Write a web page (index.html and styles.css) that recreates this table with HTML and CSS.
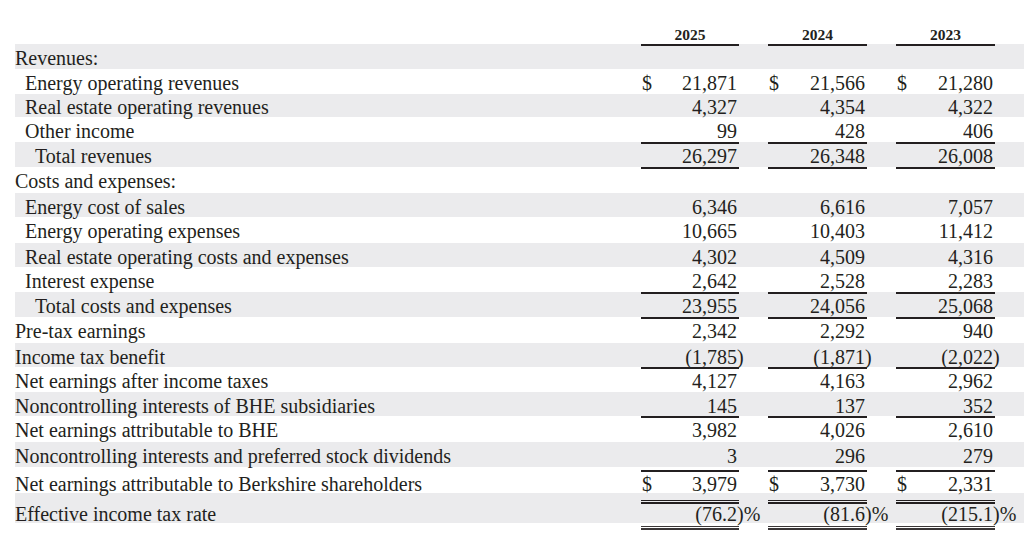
FILE: index.html
```html
<!DOCTYPE html>
<html lang="en">
<head>
<meta charset="utf-8">
<title>BHE Results</title>
<link rel="stylesheet" href="styles.css">
</head>
<body>
<div class="sheet">
  <div class="row head">
    <div class="label"></div>
    <div class="year">2025</div>
    <div class="year">2024</div>
    <div class="year">2023</div>
  </div>

  <div class="row shade h25">
    <div class="label">Revenues:</div>
    <div class="amt ol"></div><div class="amt ol"></div><div class="amt ol"></div>
  </div>
  <div class="row h25">
    <div class="label l2">Energy operating revenues</div>
    <div class="amt"><span class="cur">$</span><span class="num">21,871</span></div>
    <div class="amt"><span class="cur">$</span><span class="num">21,566</span></div>
    <div class="amt"><span class="cur">$</span><span class="num">21,280</span></div>
  </div>
  <div class="row shade h23 up">
    <div class="label l2">Real estate operating revenues</div>
    <div class="amt"><span class="num">4,327</span></div>
    <div class="amt"><span class="num">4,354</span></div>
    <div class="amt"><span class="num">4,322</span></div>
  </div>
  <div class="row h25">
    <div class="label l2">Other income</div>
    <div class="amt"><span class="num">99</span></div>
    <div class="amt"><span class="num">428</span></div>
    <div class="amt"><span class="num">406</span></div>
  </div>
  <div class="row shade h25">
    <div class="label l3">Total revenues</div>
    <div class="amt ol"><span class="num">26,297</span></div>
    <div class="amt ol"><span class="num">26,348</span></div>
    <div class="amt ol"><span class="num">26,008</span></div>
  </div>
  <div class="row h26">
    <div class="label">Costs and expenses:</div>
    <div class="amt ol"></div><div class="amt ol"></div><div class="amt ol"></div>
  </div>
  <div class="row shade h24">
    <div class="label l2">Energy cost of sales</div>
    <div class="amt"><span class="num">6,346</span></div>
    <div class="amt"><span class="num">6,616</span></div>
    <div class="amt"><span class="num">7,057</span></div>
  </div>
  <div class="row h26">
    <div class="label l2">Energy operating expenses</div>
    <div class="amt"><span class="num">10,665</span></div>
    <div class="amt"><span class="num">10,403</span></div>
    <div class="amt"><span class="num">11,412</span></div>
  </div>
  <div class="row shade h24">
    <div class="label l2">Real estate operating costs and expenses</div>
    <div class="amt"><span class="num">4,302</span></div>
    <div class="amt"><span class="num">4,509</span></div>
    <div class="amt"><span class="num">4,316</span></div>
  </div>
  <div class="row h25">
    <div class="label l2">Interest expense</div>
    <div class="amt"><span class="num">2,642</span></div>
    <div class="amt"><span class="num">2,528</span></div>
    <div class="amt"><span class="num">2,283</span></div>
  </div>
  <div class="row shade h25">
    <div class="label l3">Total costs and expenses</div>
    <div class="amt ol"><span class="num">23,955</span></div>
    <div class="amt ol"><span class="num">24,056</span></div>
    <div class="amt ol"><span class="num">25,068</span></div>
  </div>
  <div class="row h26">
    <div class="label">Pre-tax earnings</div>
    <div class="amt ol"><span class="num">2,342</span></div>
    <div class="amt ol"><span class="num">2,292</span></div>
    <div class="amt ol"><span class="num">940</span></div>
  </div>
  <div class="row shade h24">
    <div class="label">Income tax benefit</div>
    <div class="amt"><span class="num">(1,785<span class="hang">)</span></span></div>
    <div class="amt"><span class="num">(1,871<span class="hang">)</span></span></div>
    <div class="amt"><span class="num">(2,022<span class="hang">)</span></span></div>
  </div>
  <div class="row h25">
    <div class="label">Net earnings after income taxes</div>
    <div class="amt ol"><span class="num">4,127</span></div>
    <div class="amt ol"><span class="num">4,163</span></div>
    <div class="amt ol"><span class="num">2,962</span></div>
  </div>
  <div class="row shade h24">
    <div class="label">Noncontrolling interests of BHE subsidiaries</div>
    <div class="amt"><span class="num">145</span></div>
    <div class="amt"><span class="num">137</span></div>
    <div class="amt"><span class="num">352</span></div>
  </div>
  <div class="row h26">
    <div class="label">Net earnings attributable to BHE</div>
    <div class="amt ol"><span class="num">3,982</span></div>
    <div class="amt ol"><span class="num">4,026</span></div>
    <div class="amt ol"><span class="num">2,610</span></div>
  </div>
  <div class="row shade h25">
    <div class="label">Noncontrolling interests and preferred stock dividends</div>
    <div class="amt"><span class="num">3</span></div>
    <div class="amt"><span class="num">296</span></div>
    <div class="amt"><span class="num">279</span></div>
  </div>
  <div class="row h26 down3">
    <div class="label">Net earnings attributable to Berkshire shareholders</div>
    <div class="amt ol"><span class="cur">$</span><span class="num">3,979</span></div>
    <div class="amt ol"><span class="cur">$</span><span class="num">3,730</span></div>
    <div class="amt ol"><span class="cur">$</span><span class="num">2,331</span></div>
  </div>
  <div class="row shade h30 down7">
    <div class="label">Effective income tax rate</div>
    <div class="amt dbl"><span class="num">(76.2<span class="hang">)%</span></span></div>
    <div class="amt dbl"><span class="num">(81.6<span class="hang">)%</span></span></div>
    <div class="amt dbl"><span class="num">(215.1<span class="hang">)%</span></span></div>
  </div>
  <div class="row foot">
    <div class="label"></div>
    <div class="amt dbl-low"></div><div class="amt dbl-low"></div><div class="amt dbl-low"></div>
  </div>
</div>
</body>
</html>
```

FILE: styles.css
```css
html, body {
  margin: 0;
  padding: 0;
  background: #ffffff;
}

.sheet {
  margin-left: 15px;
  font-family: "Liberation Serif", "Times New Roman", serif;
  font-size: 20px;
  color: #231f20;
}

.row {
  display: grid;
  grid-template-columns: 1fr 98px 99px 99px;
  column-gap: 29px;
  padding-right: 29px;
  height: 25px;
  line-height: 29px;
  white-space: nowrap;
  box-sizing: border-box;
}

.row.shade { background: #ebebed; }

.h23 { height: 23px; }
.h24 { height: 24px; }
.h25 { height: 25px; }
.h26 { height: 26px; }
.h30 { height: 30px; }

.up { line-height: 26px; }
.down3 { padding-top: 3px; }
.down7 { padding-top: 7px; }

.head {
  height: 44px;
  padding-top: 26px;
  line-height: 18px;
}

.year {
  text-align: center;
  font-weight: bold;
  font-size: 15.5px;
}

.label { padding-left: 0; }
.label.l2 { padding-left: 10px; }
.label.l3 { padding-left: 20px; }

.amt {
  display: flex;
  padding: 0 2px 0 1px;
}

.cur { flex: none; }

.num {
  margin-left: auto;
  text-align: right;
}

.hang {
  display: inline-block;
  width: 0;
  text-align: left;
  overflow: visible;
}

.ol {
  background: linear-gradient(#231f20, #231f20) top left / 100% 2px no-repeat;
}

.dbl {
  background:
    linear-gradient(to bottom, #231f20 0 1.5px, transparent 1.5px 2.5px, #231f20 2.5px 4px)
    top left / 100% 4px no-repeat;
}

.down3 .ol, .down7 .dbl {
  background-origin: border-box;
}

.foot {
  height: 10px;
}

.dbl-low {
  background:
    linear-gradient(to bottom, #3a3637 0 1.5px, transparent 1.5px 2.5px, #3a3637 2.5px 4px)
    0 3px / 100% 4px no-repeat;
}
```
